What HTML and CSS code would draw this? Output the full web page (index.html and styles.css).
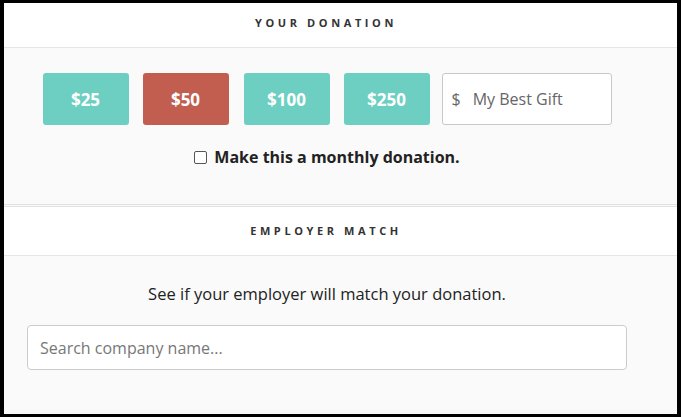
FILE: index.html
```html
<!DOCTYPE html>
<html>
<head>
<meta charset="utf-8">
<link rel="stylesheet" href="styles.css">
</head>
<body>
<div class="frame">
  <div class="section-head first"><h2>YOUR DONATION</h2></div>
  <div class="section-body donation">
    <div class="amounts">
      <button class="amt">$25</button>
      <button class="amt active">$50</button>
      <button class="amt">$100</button>
      <button class="amt">$250</button>
      <label class="custom"><span class="cur">$</span><span class="ph">My Best Gift</span></label>
    </div>
    <label class="monthly"><span class="box"></span>Make this a monthly donation.</label>
  </div>
  <div class="section-head second"><h2>EMPLOYER MATCH</h2></div>
  <div class="section-body employer">
    <p class="lead">See if your employer will match your donation.</p>
    <div class="search">Search company name...</div>
  </div>
</div>
</body>
</html>
```
FILE: styles.css
```css
html, body { margin: 0; padding: 0; background: #000; }
body { font-family: "Open Sans", "Liberation Sans", sans-serif; }
.frame {
  margin: 3px 4px;
  width: 673px;
  height: 411px;
  background: #fafafa;
  overflow: hidden;
}
.section-head {
  background: #fff;
  border-bottom: 1px solid #e6e6e6;
  display: flex;
  align-items: center;
  justify-content: center;
  padding-right: 27px;
  box-sizing: border-box;
}
.section-head.first {
  height: 45px;
  padding-bottom: 6px;
}
.section-head.second {
  border-top: 1px solid #e1e1e1;
  height: 50px;
  padding-bottom: 1px;
}
.section-head h2 {
  margin: 0;
  font-size: 11px;
  font-weight: 700;
  letter-spacing: 3.6px;
  color: #333;
  padding-right: 2px;
}
.section-body { padding-right: 27px; }
.donation {
  height: 157px;
  padding-top: 25px;
  box-sizing: border-box;
  border-bottom: 1px solid #e1e1e1;
  margin-bottom: 1px;
  display: flex;
  flex-direction: column;
  align-items: center;
}
.amounts { display: flex; gap: 14px; }
.amt {
  width: 86px;
  height: 52px;
  border: 0;
  border-radius: 3px;
  background: #6dcfc2;
  color: #fff;
  font-family: inherit;
  font-size: 17px;
  font-weight: 700;
  padding: 0;
}
.amt.active { background: #c25e50; }
.amt.active + .amt { margin-left: 1px; }
.custom {
  width: 170px;
  height: 52px;
  box-sizing: border-box;
  border: 1px solid #c8c8c8;
  border-radius: 3px;
  background: #fff;
  display: flex;
  align-items: center;
  padding-left: 9px;
  font-size: 16px;
  color: #666;
  margin-left: -2px;
}
.cur { margin-right: 12px; }
.monthly {
  margin-top: 21px;
  display: flex;
  align-items: center;
  font-size: 16px;
  font-weight: 700;
  color: #222;
}
.box {
  width: 11px;
  height: 11px;
  border: 1px solid #555;
  border-radius: 2px;
  background: #fff;
  margin-right: 7px;
}
.employer {
  padding-top: 26px;
  display: flex;
  flex-direction: column;
  align-items: center;
}
.lead {
  margin: 0;
  font-size: 16.5px;
  color: #222;
}
.search {
  margin-top: 20px;
  width: 600px;
  height: 45px;
  box-sizing: border-box;
  border: 1px solid #ccc;
  border-radius: 4px;
  background: #fff;
  display: flex;
  align-items: center;
  padding-left: 12px;
  font-size: 16px;
  color: #777;
}
```
